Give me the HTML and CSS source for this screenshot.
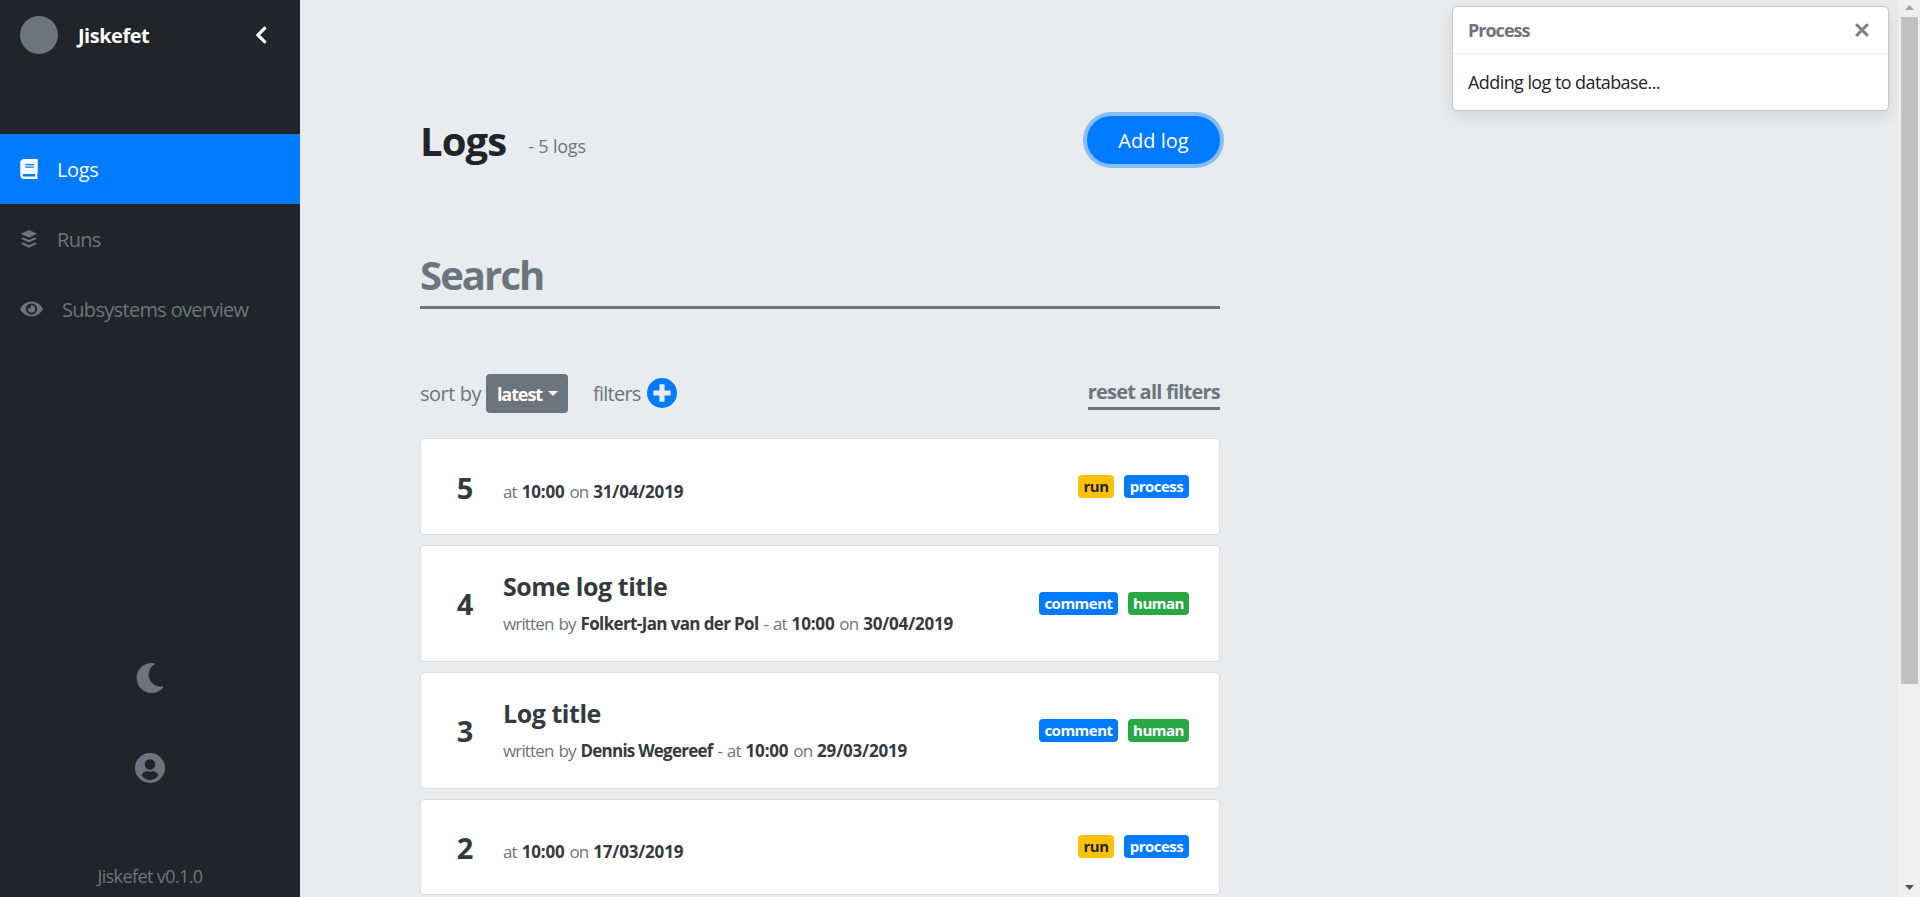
FILE: index.html
```html
<!DOCTYPE html>
<html lang="en">
<head>
<meta charset="utf-8">
<title>Jiskefet</title>
<link rel="stylesheet" href="styles.css">
</head>
<body>
<div class="app">
  <aside class="sidebar">
    <header class="brand">
      <span class="brand-logo"></span>
      <span class="brand-name">Jiskefet</span>
      <svg class="brand-toggle" viewBox="0 0 320 512"><path d="M34.52 239.03L228.87 44.69c9.37-9.37 24.57-9.37 33.94 0l22.67 22.67c9.36 9.36 9.37 24.52.04 33.9L131.49 256l154.02 154.75c9.34 9.38 9.32 24.54-.04 33.9l-22.67 22.67c-9.37 9.37-24.57 9.37-33.94 0L34.52 272.97c-9.37-9.37-9.37-24.57 0-33.94z"/></svg>
    </header>
    <nav class="nav">
      <a class="nav-item active">
        <svg class="icon-book" viewBox="0 0 448 512"><path d="M448 360V24c0-13.3-10.7-24-24-24H96C43 0 0 43 0 96v320c0 53 43 96 96 96h328c13.3 0 24-10.7 24-24v-16c0-7.5-3.5-14.3-8.9-18.7-4.2-15.4-4.2-59.3 0-74.7 5.4-4.3 8.9-11.1 8.9-18.6zM128 134c0-3.3 2.7-6 6-6h212c3.3 0 6 2.7 6 6v20c0 3.3-2.7 6-6 6H134c-3.3 0-6-2.7-6-6v-20zm0 64c0-3.3 2.7-6 6-6h212c3.3 0 6 2.7 6 6v20c0 3.3-2.7 6-6 6H134c-3.3 0-6-2.7-6-6v-20zm253.4 250H96c-17.7 0-32-14.3-32-32 0-17.6 14.4-32 32-32h285.4c-1.9 17.1-1.9 46.9 0 64z"/></svg>
        <span>Logs</span>
      </a>
      <a class="nav-item">
        <svg class="icon-layers" viewBox="0 0 18 18"><path d="M9 0l8.3 3.7L9 7.5.7 3.7zM.7 8.6l2.600-1.100L9 10.100l5.700-2.600 2.600 1.100L9 12.600zM.7 13.700l2.600-1.100L9 15.200l5.700-2.600 2.600 1.100L9 17.700z"/></svg>
        <span>Runs</span>
      </a>
      <a class="nav-item">
        <svg class="icon-eye" viewBox="0 0 576 512"><path d="M572.52 241.4C518.29 135.59 410.93 64 288 64S57.68 135.64 3.48 241.41a32.35 32.35 0 0 0 0 29.19C57.71 376.41 165.07 448 288 448s230.32-71.64 284.52-177.41a32.35 32.35 0 0 0 0-29.19zM288 400a144 144 0 1 1 144-144 143.93 143.93 0 0 1-144 144zm0-240a95.31 95.31 0 0 0-25.31 3.79 47.85 47.85 0 0 1-66.9 66.9A95.78 95.78 0 1 0 288 160z"/></svg>
        <span>Subsystems overview</span>
      </a>
    </nav>
    <footer class="sidebar-foot">
      <svg class="foot-icon" viewBox="0 0 512 512"><path d="M283.211 512c78.962 0 151.079-35.925 198.857-94.792 7.068-8.708-.639-21.43-11.562-19.35-124.203 23.654-238.262-71.576-238.262-196.954 0-72.222 38.662-138.635 101.498-174.394 9.686-5.512 7.25-20.197-3.756-22.23A258.156 258.156 0 0 0 283.211 0c-141.309 0-256 114.511-256 256 0 141.309 114.511 256 256 256z"/></svg>
      <svg class="foot-icon" viewBox="0 0 30 30"><path fill-rule="evenodd" d="M15 0a15 15 0 1 0 0 30a15 15 0 1 0 0-30zM15 6.200a5.300 5.300 0 1 1 0 10.600a5.300 5.300 0 1 1 0-10.600zM6.500 22.300c1.200-2.600 3.500-4 6-4 .8 0 1.300.5 2.500.5s1.700-.5 2.500-.5c2.500 0 4.800 1.400 6 4-2 3.100-5.100 4.700-8.500 4.700s-6.500-1.600-8.500-4.700z"/></svg>
      <span class="version">Jiskefet v0.1.0</span>
    </footer>
  </aside>

  <main class="content">
    <div class="page-head">
      <h1 class="page-title">Logs</h1>
      <span class="page-count">- 5 logs</span>
      <button class="add-button">Add log</button>
    </div>
    <div class="search">Search</div>
    <div class="toolbar">
      <span class="sort-label">sort by</span>
      <button class="sort-button"><span>latest</span><i class="caret"></i></button>
      <span class="filter-label">filters</span>
      <svg class="filter-add" viewBox="0 0 30 30"><circle cx="15" cy="15" r="15"/><path d="M13 6.300h4a.6.6 0 0 1 .6.6v5.500h5.500a.6.6 0 0 1 .6.6v4a.6.6 0 0 1-.6.6h-5.500v5.500a.6.6 0 0 1-.6.6h-4a.6.6 0 0 1-.6-.6v-5.500H6.900a.6.6 0 0 1-.6-.6v-4a.6.6 0 0 1 .6-.6h5.500V6.900a.6.6 0 0 1 .6-.6z"/></svg>
      <a class="reset">reset all filters</a>
    </div>
    <section class="logs">
      <article class="card short">
        <div class="card-id">5</div>
        <div class="card-body"><p class="meta">at <b class="num">10:00</b> on <b class="num">31/04/2019</b></p></div>
        <div class="tags"><span class="tag yellow run">run</span><span class="tag blue process">process</span></div>
      </article>
      <article class="card">
        <div class="card-id">4</div>
        <div class="card-body">
          <h2 class="card-title">Some log title</h2>
          <p class="meta">written by <b>Folkert-Jan van der Pol</b> - at <b class="num">10:00</b> on <b class="num">30/04/2019</b></p>
        </div>
        <div class="tags"><span class="tag blue comment">comment</span><span class="tag green human">human</span></div>
      </article>
      <article class="card">
        <div class="card-id">3</div>
        <div class="card-body">
          <h2 class="card-title">Log title</h2>
          <p class="meta">written by <b class="tight">Dennis Wegereef</b> - at <b class="num">10:00</b> on <b class="num">29/03/2019</b></p>
        </div>
        <div class="tags"><span class="tag blue comment">comment</span><span class="tag green human">human</span></div>
      </article>
      <article class="card short">
        <div class="card-id">2</div>
        <div class="card-body"><p class="meta">at <b class="num">10:00</b> on <b class="num">17/03/2019</b></p></div>
        <div class="tags"><span class="tag yellow run">run</span><span class="tag blue process">process</span></div>
      </article>
    </section>
    <div class="toast">
      <div class="toast-head">
        <strong>Process</strong>
        <svg class="toast-close" viewBox="0 0 14 14"><path d="M2 2l10 10M12 2L2 12"/></svg>
      </div>
      <div class="toast-body">Adding log to database...</div>
    </div>
  </main>

  <div class="scrollbar">
    <svg class="scroll-arrow up" viewBox="0 0 9 5"><path d="M0 5L4.500 0 9 5z"/></svg>
    <div class="scroll-thumb"></div>
    <svg class="scroll-arrow down" viewBox="0 0 9 5"><path d="M0 0L4.500 5 9 0z"/></svg>
  </div>
</div>
</body>
</html>
```
FILE: styles.css
```css
* { box-sizing: border-box; }

body {
  margin: 0;
  height: 897px;
  overflow: hidden;
  background: #e8ecef;
  color: #212529;
  font-family: "Open Sans", "Noto Sans", sans-serif;
  font-size: 20px;
  line-height: 30px;
}

h1, h2, p { margin: 0; }
svg { display: block; flex: none; fill: currentColor; }
button { border: 0; font: inherit; color: #fff; padding: 0; }
b, strong { font-weight: 700; }

.app { display: flex; height: 897px; white-space: nowrap; }

/* Sidebar */
.sidebar {
  display: flex;
  flex-direction: column;
  width: 300px;
  flex: none;
  background: #212529;
  color: #6c757d;
}
.brand {
  display: flex;
  align-items: center;
  height: 134px;
  padding: 16px 33px 80px 20px;
  color: #fff;
}
.brand-logo { width: 38px; height: 38px; border-radius: 50%; background: #6c757d; }
.brand-name { margin-left: 20px; padding-top: 2px; font-weight: 700; letter-spacing: -0.5px; }
.brand-toggle { width: 12.5px; height: 20px; margin-left: auto; }
.nav-item { display: flex; align-items: center; gap: 19px; height: 70px; padding: 0 20px; letter-spacing: -0.68px; }
.nav-item span { padding-top: 2px; }
.nav-item.active { background: #007bff; color: #f8f9fa; letter-spacing: -0.35px; }
.icon-book { width: 18px; height: 20px; }
.icon-layers { width: 18px; height: 18px; }
.icon-eye { width: 23px; height: 20px; }
.sidebar-foot { display: flex; flex-direction: column; align-items: center; margin-top: auto; padding-bottom: 6px; }
.foot-icon { width: 30px; height: 30px; margin-bottom: 60px; }
.version { margin-top: 18px; font-size: 18px; letter-spacing: -0.6px; }

/* Main column */
.content { position: relative; flex: 1; padding: 116px 0 0 120px; overflow: hidden; }
.page-head { display: flex; width: 800px; height: 48px; }
.page-title { padding-top: 1px; font-size: 40px; line-height: 48px; font-weight: 700; letter-spacing: -0.9px; }
.page-count { margin: 15px 0 0 22px; font-size: 18px; letter-spacing: -0.2px; color: #6c757d; }
.add-button {
  width: 133px;
  height: 48px;
  margin-left: auto;
  padding-top: 1px;
  border-radius: 24px;
  background: #007bff;
  box-shadow: 0 0 0 4px rgba(0, 123, 255, 0.42);
}
.search {
  width: 800px;
  height: 67px;
  margin-top: 78px;
  padding-top: 3px;
  border-bottom: 3px solid #6c757d;
  color: #6c757d;
  font-size: 40px;
  line-height: 60px;
  font-weight: 700;
  letter-spacing: -1.9px;
}
.toolbar { display: flex; align-items: center; width: 800px; height: 39px; margin-top: 65px; color: #6c757d; }
.sort-label { letter-spacing: -0.48px; }
.sort-button {
  display: flex;
  align-items: center;
  gap: 6px;
  width: 82px;
  height: 39px;
  margin-left: 5px;
  padding-left: 11px;
  border-radius: 4px;
  background: #6c757d;
  font-size: 18px;
  font-weight: 700;
  letter-spacing: -1.1px;
}
.caret { border: 5px solid transparent; border-top-color: #fff; border-bottom: 0; }
.filter-label { margin-left: 25px; letter-spacing: -0.75px; }
.filter-add { width: 30px; height: 30px; margin: 0 0 1px 6px; color: #007bff; }
.filter-add path { fill: #e8ecef; }
.reset { height: 33px; margin-left: auto; border-bottom: 3px solid #6c757d; font-weight: 700; letter-spacing: -0.78px; }

/* Log cards */
.logs { display: flex; flex-direction: column; gap: 10px; width: 800px; margin-top: 25.25px; }
.card {
  display: flex;
  align-items: center;
  flex: none;
  height: 116.75px;
  padding: 0 30px 0 33px;
  border: 1px solid #dcdddf;
  border-radius: 4px;
  background: #fff;
  color: #343a40;
}
.card.short { height: 96.75px; }
.card-id { width: 22px; padding-top: 2px; text-align: center; font-size: 29px; font-weight: 700; }
.card-body { margin-left: 27px; padding-top: 1px; }
.card-title { height: 40px; font-size: 25px; line-height: 30px; font-weight: 700; letter-spacing: -0.45px; }
.meta { font-size: 17px; line-height: 26px; letter-spacing: -0.85px; word-spacing: 1.3px; color: #6c757d; }
.meta b { color: #343a40; letter-spacing: -0.63px; word-spacing: 0; }
.meta .num { letter-spacing: -0.18px; }
.meta .tight { letter-spacing: -0.77px; }
.short .meta { padding-top: 10px; }
.tags { display: flex; gap: 10px; margin-left: auto; }
.tag { height: 23px; border-radius: 4px; text-align: center; font-size: 15px; line-height: 22px; font-weight: 700; letter-spacing: -0.5px; color: #fff; }
.yellow { background: #ffc107; color: #212529; }
.blue { background: #007bff; }
.green { background: #28a745; }
.run { width: 36px; }
.process { width: 65px; }
.comment { width: 79px; }
.human { width: 61px; }

/* Notification */
.toast {
  position: absolute;
  top: 6px;
  right: 10px;
  width: 437px;
  height: 105px;
  border: 1px solid #c5c9cd;
  border-radius: 5px;
  background: #fff;
  box-shadow: 0 5px 15px rgba(0, 0, 0, 0.1);
  font-size: 18px;
}
.toast-head {
  display: flex;
  align-items: center;
  justify-content: space-between;
  height: 47px;
  padding: 0 19px 0 15px;
  border-bottom: 1px solid #f0f0f1;
  color: #6c757d;
}
.toast-head strong { font-weight: 700; letter-spacing: -1px; }
.toast-close { width: 14px; height: 14px; fill: none; stroke: #7f7f7f; stroke-width: 3; stroke-linecap: round; }
.toast-body { padding: 13px 15px; letter-spacing: -0.58px; }

/* Scrollbar */
.scrollbar { display: flex; flex-direction: column; align-items: center; width: 21px; background: #f0f0f0; }
.scroll-arrow { width: 9px; height: 5px; }
.up { margin: 5px 0 7px; color: #a3a3a3; }
.down { margin: auto 0 7px; color: #505050; }
.scroll-thumb { width: 17px; height: 667px; background: #c1c1c1; }
```
